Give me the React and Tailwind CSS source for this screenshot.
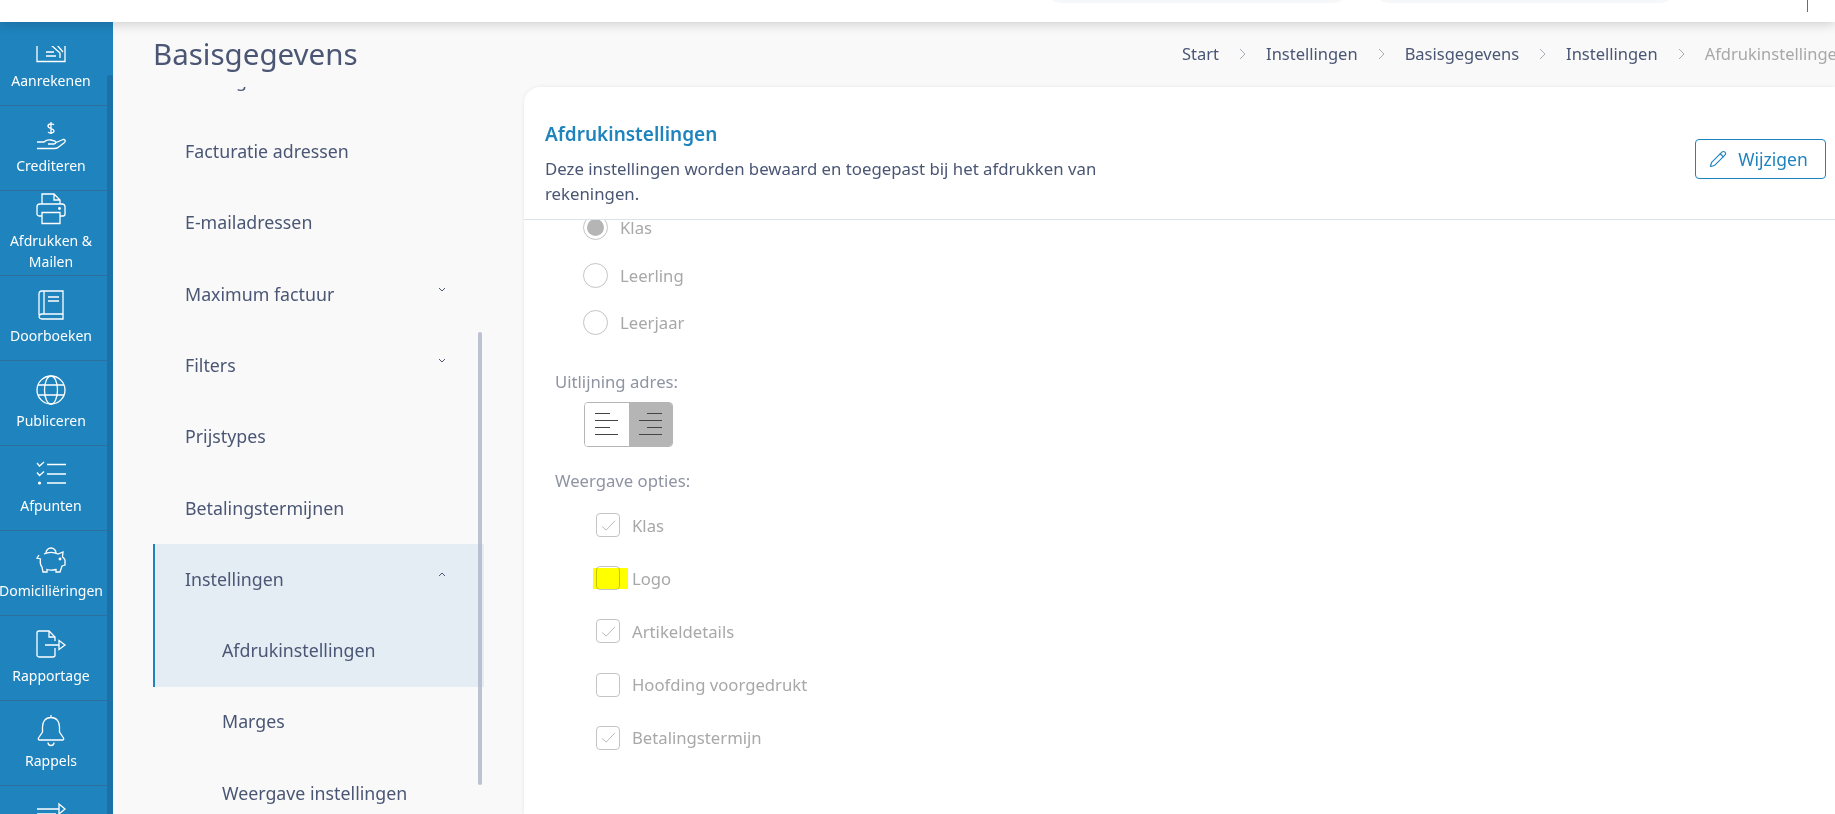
import { Pencil } from "lucide-react";

const sideItems = [
  {
    label: "Aanrekenen",
    icon: (
      <>
        <path d="M1 10V26.5H29V10" />
        <path d="M10 17H18M10 21H20M15 10L24 18V23M21 10L27 17" />
      </>
    ),
  },
  {
    label: "Crediteren",
    icon: (
      <>
        <path d="M18 5C17 3.5 12 3.5 12 6C12 9 18 8 18 11C18 13.5 13 13.5 12 12M15 2V14" />
        <path d="M1 22H8C10 20 12 19.5 15 20L19 21C20.5 21.5 20 24 18 24H12" />
        <path d="M19 23L27 19.5C29 19 30 21 28.5 22.5L22 27.5C21 28.5 19 28.5 18 28.5H1" />
      </>
    ),
  },
  {
    label: "Afdrukken & Mailen",
    icon: (
      <>
        <path d="M6 9V-1H18L24 5V9M18 -1V5H24" />
        <path d="M6 21H3A2 2 0 0 1 1 19V12A3 3 0 0 1 4 9H26A3 3 0 0 1 29 12V19A2 2 0 0 1 27 21H24" />
        <path d="M6 17.5H24V28.5H6Z" />
        <circle cx="23.5" cy="13.5" r="0.8" fill="white" />
      </>
    ),
  },
  {
    label: "Doorboeken",
    icon: (
      <>
        <path d="M3 25V4A3 3 0 0 1 6 1H27V24H6A3 3 0 0 0 3 26.5A3 3 0 0 0 6 29H27V24" />
        <path d="M8 1V24M12 7H23M12 11H23" />
      </>
    ),
  },
  {
    label: "Publiceren",
    icon: (
      <>
        <circle cx="15" cy="15" r="14" />
        <ellipse cx="15" cy="15" rx="6.5" ry="14" />
        <path d="M2 10H28M2 20H28" />
      </>
    ),
  },
  {
    label: "Afpunten",
    icon: (
      <>
        <path d="M1 3L3.5 6L8 2M1 12.5L3.5 15.5L8 11.5" />
        <path d="M11 4.5H30M11 14H30M11 23H30" />
        <circle cx="3.5" cy="23" r="1.6" fill="white" stroke="none" />
      </>
    ),
  },
  {
    label: "Domiciliëringen",
    icon: (
      <>
        <path d="M10 8A5 5 0 0 1 20 8" />
        <path d="M8 9C12 7 18 7 22 9L27 7L26.5 12C28 13 29 15 29 15V20L26 21L24 27H20V24.5C16 25.5 14 25.5 11 24.5V27H7L6 22C4 20 4 17 4.5 14L1 13L3 10" />
        <circle cx="24" cy="14" r="0.8" fill="white" />
      </>
    ),
  },
  {
    label: "Rapportage",
    icon: (
      <>
        <path d="M19 18V25A2 2 0 0 1 17 27H3A2 2 0 0 1 1 25V3A2 2 0 0 1 3 1H13L19 7V11" />
        <path d="M13 1V7H19M9 15H23M23 10.5L29 15L23 19.5Z" />
      </>
    ),
  },
  {
    label: "Rappels",
    icon: (
      <>
        <path d="M15 0V2.5M15 2.5C9 2.5 6.5 7 6.5 12V17L2.5 23C2 24 2.5 25 3.5 25H26.5C27.5 25 28 24 27.5 23L23.5 17V12C23.5 7 21 2.5 15 2.5Z" />
        <path d="M12 27.5A3 3 0 0 0 18 27.5" />
      </>
    ),
  },
  {
    // label of this one is below the fold
    label: "",
    icon: (
      <>
        <path d="M1 9H23M23 4L29 9L23 14ZM1 14H20" />
      </>
    ),
  },
];

const menuItems = [
  { label: "Kortingen" },
  { label: "Facturatie adressen" },
  { label: "E-mailadressen" },
  { label: "Maximum factuur", chevron: "down" },
  { label: "Filters", chevron: "down" },
  { label: "Prijstypes" },
  { label: "Betalingstermijnen" },
];

const crumbs = ["Start", "Instellingen", "Basisgegevens", "Instellingen"];
const radios = [
  { label: "Klas", checked: true },
  { label: "Leerling" },
  { label: "Leerjaar" },
];
const options = [
  { label: "Klas", checked: true },
  { label: "Logo", marked: true },
  { label: "Artikeldetails", checked: true },
  { label: "Hoofding voorgedrukt" },
  { label: "Betalingstermijn", checked: true },
];

function SmallChevron({ up }) {
  return (
    <svg viewBox="0 0 8 5" className="w-2 h-[5px] mb-[10px] fill-none stroke-[#4a5674] stroke-1">
      <path d={up ? "M1 4L4 1L7 4" : "M1 1L4 4L7 1"} />
    </svg>
  );
}

function MenuRow({ label, chevron, sub }) {
  return (
    <div
      className={`h-[71.3px] flex items-center justify-between pr-[38px] pb-px ${sub ? "pl-[69px]" : "pl-8"}`}
    >
      <span>{label}</span>
      {chevron && <SmallChevron up={chevron === "up"} />}
    </div>
  );
}

function AlignIcon({ right }) {
  return (
    <svg viewBox="0 0 23 22" className="w-[23px] h-[22px] fill-none stroke-[#444] stroke-1">
      {right ? (
        <path d="M8 .5H23M0 7.5H23M8 14.5H23M0 21.5H23" />
      ) : (
        <path d="M0 .5H15M0 7.5H23M0 14.5H15M0 21.5H23" />
      )}
    </svg>
  );
}

export default function App() {
  return (
    <div className="h-screen w-full overflow-hidden flex flex-col bg-[#f9f9f9] font-['Noto_Sans',sans-serif] text-[#4a5674]">
      {/* Top bar, only its lower edge is in view */}
      <header className="h-[22px] shrink-0 bg-white relative z-10 shadow-[0_2px_12px_rgba(0,0,0,0.18)] flex items-start pl-[1045px]">
        <div className="w-[304px] h-10 -mt-[37px] bg-[#f6f7f9] rounded-2xl"></div>
        <div className="w-[303px] h-10 -mt-[37px] ml-6 bg-[#f6f7f9] rounded-2xl"></div>
        <div className="w-px h-3 ml-[131px] bg-[#1f83bd]"></div>
      </header>

      <div className="flex flex-1 min-h-0">
        {/* Left rail */}
        <aside className="w-[113px] shrink-0 bg-[#1f83bd] pt-6 relative overflow-hidden">
          <div className="h-full overflow-hidden">
            <div className="-mt-[25px]">
              {sideItems.map((item, i) => (
                <div
                  key={i}
                  className="h-[85px] border-b border-[#2f6f9e] pr-[11px] flex flex-col items-center justify-center gap-[5px] text-white text-[14px] leading-[21px]"
                >
                  <svg
                    viewBox="0 0 30 30"
                    className="w-[30px] h-[30px] shrink-0 overflow-visible fill-none stroke-white stroke-[1.3]"
                  >
                    {item.icon}
                  </svg>
                  {item.label ? (
                    <span className="text-center">{item.label}</span>
                  ) : (
                    <span className="h-[21px]"></span>
                  )}
                </div>
              ))}
            </div>
          </div>
          <div className="absolute right-0 top-[53px] bottom-0 w-[6px] bg-[#1c72a8] rounded-t"></div>
        </aside>

        <main className="flex-1 min-w-0 flex flex-col">
          <div className="h-[65px] shrink-0 flex items-center pl-10 overflow-hidden">
            <h1 className="w-[1029px] shrink-0 text-[29.5px] leading-9 -mt-[2px]">Basisgegevens</h1>
            <nav className="flex items-center gap-5 shrink-0 text-[16.5px] -mt-px">
              {crumbs.map((c, i) => (
                <div key={i} className="flex items-center gap-5">
                  <span>{c}</span>
                  <svg viewBox="0 0 7 12" className="w-[7px] h-3 fill-none stroke-[#a9adb8] stroke-1">
                    <path d="M1 1L6 6L1 11" />
                  </svg>
                </div>
              ))}
              <span className="text-[#a8a8a8]">Afdrukinstellingen</span>
            </nav>
          </div>

          <div className="flex flex-1 min-h-0 pl-10 gap-10">
            {/* Settings menu */}
            <div className="w-[331px] shrink-0 relative overflow-hidden text-[17.8px]">
              <div className="-mt-[42px]">
                {menuItems.map((m) => (
                  <MenuRow key={m.label} {...m} />
                ))}
                <div className="bg-[#e4ecf4] border-l-2 border-[#1f83bd]">
                  <div className="-ml-[2px]">
                    <MenuRow label="Instellingen" chevron="up" />
                    <MenuRow label="Afdrukinstellingen" sub />
                  </div>
                </div>
                <MenuRow label="Marges" sub />
                <MenuRow label="Weergave instellingen" sub />
              </div>
              <div className="absolute right-[2px] top-[245px] h-[453px] w-1 rounded bg-[#b4bccd]/90"></div>
            </div>

            {/* Card */}
            <section className="flex-1 min-w-0 flex flex-col bg-white rounded-tl-2xl shadow-[0_0_4px_rgba(0,0,0,0.08)]">
              <div className="h-[133px] shrink-0 border-b border-[#d9e4ea] flex justify-between pl-[21px] pr-[9px]">
                <div className="pt-[35px] w-[590px]">
                  <h2 className="text-[#1f83bd] text-[19px] leading-6 font-semibold">Afdrukinstellingen</h2>
                  <p className="mt-[10px] text-[16.8px] leading-[25px]">
                    Deze instellingen worden bewaard en toegepast bij het afdrukken van rekeningen.
                  </p>
                </div>
                <button className="mt-[52px] w-[131px] h-10 pr-1 rounded border border-[#1f83bd] text-[#1f83bd] text-[17.5px] flex items-center justify-center gap-[11px]">
                  <Pencil size={18} strokeWidth={1.5} />
                  Wijzigen
                </button>
              </div>

              <div className="flex-1 min-h-0 overflow-hidden text-[16.7px]">
                <div className="-mt-4 ml-[59px]">
                  {radios.map((r) => (
                    <div key={r.label} className="h-[47.5px] flex items-center gap-3 text-[#a8a8a8]">
                      <span className="w-[25px] h-[25px] rounded-full border border-[#c4c4c4] bg-white flex items-center justify-center">
                        {r.checked && <span className="w-[17px] h-[17px] rounded-full bg-[#b5b5b5]"></span>}
                      </span>
                      {r.label}
                    </div>
                  ))}
                </div>

                <div className="mt-[23px] ml-[31px] leading-6 text-[#8f94a3]">Uitlijning adres:</div>
                <div className="mt-2 ml-[60px] w-[89px] h-[45px] flex rounded border border-[#b5b5b5] overflow-hidden">
                  <div className="flex-1 flex items-center justify-center bg-white">
                    <AlignIcon />
                  </div>
                  <div className="flex-1 flex items-center justify-center bg-[#b5b5b5]">
                    <AlignIcon right />
                  </div>
                </div>

                <div className="mt-[22px] ml-[31px] leading-6 text-[#8f94a3]">Weergave opties:</div>
                <div className="mt-[6px] ml-[72px]">
                  {options.map((o) => (
                    <div key={o.label} className="h-[53.2px] flex items-center gap-3 text-[#a8a8a8]">
                      <span className="relative w-6 h-6 rounded border border-[#c4c4c4] bg-white flex items-center justify-center">
                        {o.checked && (
                          <svg viewBox="0 0 16 12" className="w-[15px] h-[11px] fill-none stroke-[#b5b5b5] stroke-1">
                            <path d="M1 7L5.5 11L15 1" />
                          </svg>
                        )}
                        {o.marked && (
                          <span className="absolute -left-1 top-px w-[35px] h-[21px] bg-[#ffff00] mix-blend-multiply"></span>
                        )}
                      </span>
                      {o.label}
                    </div>
                  ))}
                </div>
              </div>
            </section>
          </div>
        </main>
      </div>
    </div>
  );
}
